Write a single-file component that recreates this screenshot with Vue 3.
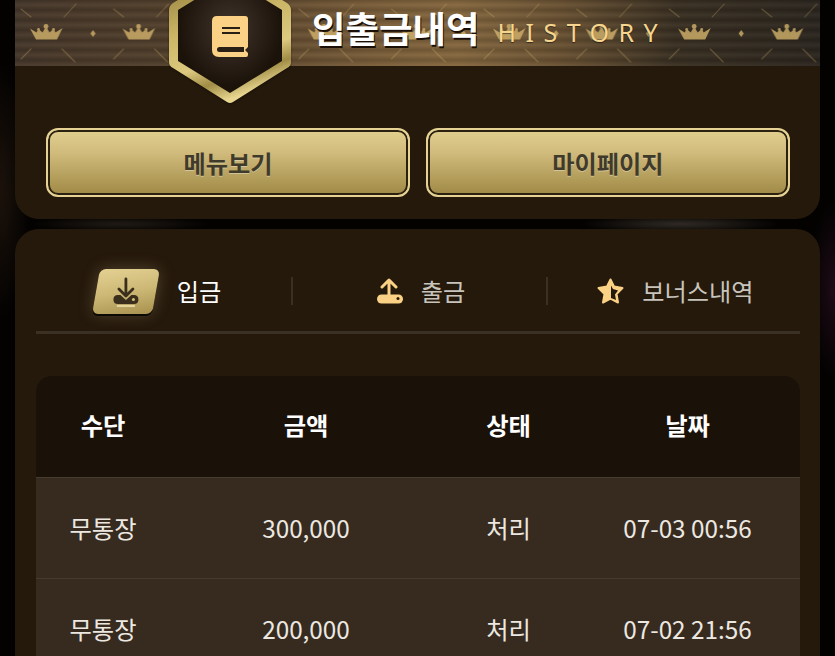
<script setup>
const rows = [
  { method: '무통장', amount: '300,000', status: '처리', date: '07-03 00:56' },
  { method: '무통장', amount: '200,000', status: '처리', date: '07-02 21:56' },
];
</script>

<template>
  <div class="page">
    <section class="top-card">
      <header class="banner">
        <svg class="pattern" width="805" height="66" aria-hidden="true">
          <defs>
            <pattern id="crowns" x="0" y="0" width="92.6" height="66" patternUnits="userSpaceOnUse">
              <g fill="#d2b26a" opacity="0.8">
                <path d="M15 28.500 L21.500 32.500 L23.500 29 L27.500 32.500 L31 26.500 L34.500 32.500 L38.500 29 L40.500 32.500 L47.500 28 L42 39.500 H21 Z" />
                <circle cx="31" cy="26.500" r="2.400" />
                <circle cx="23.500" cy="29.500" r="1.400" />
                <circle cx="38.500" cy="29.500" r="1.400" />
                <path d="M78 30 L80.500 33.500 L78 37 L75.500 33.500 Z" />
              </g>
              <g stroke="#d2b26a" stroke-width="1.100" opacity="0.3" fill="none" stroke-linecap="round">
                <path d="M6 9 L16 17" />
                <path d="M49 17 L61 4" />
                <path d="M6 59 L16 49" />
                <path d="M47 49 L60 62" />
              </g>
            </pattern>
          </defs>
          <rect width="805" height="66" fill="url(#crowns)" />
        </svg>
        <div class="banner-title">
          <h1>입출금내역</h1>
          <span class="history">HISTORY</span>
        </div>
      </header>

      <div class="badge">
        <svg width="122" height="134" viewBox="0 0 122 134">
          <defs>
            <linearGradient id="rim" x1="0.1" y1="0" x2="0.4" y2="1">
              <stop offset="0" stop-color="#8d7838" />
              <stop offset="0.45" stop-color="#cbb566" />
              <stop offset="0.72" stop-color="#dcc97f" />
              <stop offset="0.86" stop-color="#a08c45" />
              <stop offset="1" stop-color="#e8d690" />
            </linearGradient>
            <radialGradient id="core" cx="0.5" cy="0.44" r="0.5">
              <stop offset="0" stop-color="#3f362c" />
              <stop offset="0.6" stop-color="#2a2017" />
              <stop offset="1" stop-color="#1b120a" />
            </radialGradient>
          </defs>
          <path d="M61 -2 L118 33 Q122 36 122 40 V92 Q122 96 118 98 L64 132 Q61 134 58 132 L4 98 Q0 96 0 92 V40 Q0 36 4 33 Z" fill="url(#rim)" />
          <path d="M61 8 L113 40 V91 L61 123 L9 91 V40 Z" fill="url(#core)" />
          <path d="M48 46 H76 Q79 46 79 49 V77 L76 80 L79 83 V85 Q79 87 77 87 H50 Q43 87 43 80 V51 Q43 46 48 46 Z" fill="#fbd285" />
          <path d="M53 58 H71 M53 63 H71" stroke="#2a1f14" stroke-width="2.200" />
          <path d="M75 77 H50.500 Q48 77 48 79.500 Q48 82 50.500 82 H75 Z" fill="#2a1f14" />
        </svg>
      </div>

      <div class="actions">
        <button class="gold-btn">메뉴보기</button>
        <button class="gold-btn">마이페이지</button>
      </div>
    </section>

    <section class="main-card">
      <nav class="tabs">
        <div class="tab active">
          <span class="tab-chip">
            <svg width="26" height="28" viewBox="0 0 26 28">
              <path d="M13 1 V17 M6 11 L13 18 L20 11" fill="none" stroke="#3a2f1c" stroke-width="2.800" stroke-linecap="round" stroke-linejoin="round" />
              <path d="M5 17 H7.500 L13 22 L18.500 17 H21 Q25.500 17 25.500 21.500 Q25.500 26 21 26 H5 Q0.500 26 0.500 21.500 Q0.500 17 5 17 Z" fill="#3a2f1c" />
              <circle cx="20.500" cy="21.500" r="1.500" fill="#d8c27d" />
              <path d="M4 28 H22" stroke="#efe3af" stroke-width="1.600" />
            </svg>
          </span>
          <span class="tab-label">입금</span>
        </div>
        <div class="tab">
          <svg width="26" height="26" viewBox="0 0 26 26">
            <path d="M12 18 V2 M5 9 L12 2 L19 9" fill="none" stroke="#fbd285" stroke-width="3" stroke-linecap="round" stroke-linejoin="round" />
            <rect x="0" y="16.500" width="26" height="9" rx="4.500" fill="#fbd285" />
            <circle cx="21" cy="20.500" r="1.500" fill="#241a0e" />
          </svg>
          <span class="tab-label">출금</span>
        </div>
        <div class="tab">
          <svg width="27" height="26" viewBox="0 0 27 26">
            <path d="M13.500 1.500 L17 8.500 L25.500 10 L19.500 16 L21 24.500 L13.500 20.500 L6 24.500 L7.500 16 L1.500 10 L10 8.500 Z" fill="#fbd285" stroke="#fbd285" stroke-width="2" stroke-linejoin="round" />
            <path d="M14 7.500 L16 11 L21 12.500 L18 16.500 L19 22 L14 20 Z" fill="#241a0e" />
          </svg>
          <span class="tab-label">보너스내역</span>
        </div>
      </nav>

      <div class="history-table">
        <div class="row head">
          <span>수단</span>
          <span>금액</span>
          <span>상태</span>
          <span>날짜</span>
        </div>
        <div v-for="(r, i) in rows" :key="i" class="row body">
          <span>{{ r.method }}</span>
          <span>{{ r.amount }}</span>
          <span>{{ r.status }}</span>
          <span>{{ r.date }}</span>
        </div>
      </div>
    </section>
  </div>
</template>

<style>
html, body {
  margin: 0;
  background: #000;
}
</style>

<style scoped>
.page {
  position: relative;
  width: 835px;
  height: 656px;
  overflow: hidden;
  padding: 0 15px;
  box-sizing: border-box;
  background:
    radial-gradient(ellipse 90px 8px at 120px 224px, #201a14 0%, transparent 100%),
    radial-gradient(ellipse 100px 9px at 680px 224px, #302a24 0%, transparent 100%),
    radial-gradient(ellipse 30px 130px at 0 190px, #1c120b 0%, transparent 100%),
    radial-gradient(ellipse 26px 90px at 835px 290px, #1f0b17 0%, transparent 100%),
    #030201;
  font-family: "Noto Sans CJK KR", "Noto Sans", sans-serif;
  display: flex;
  flex-direction: column;
  gap: 10px;
}

.top-card {
  position: relative;
  height: 219px;
  flex-shrink: 0;
  background: #25190c;
  border-radius: 0 0 24px 24px;
}

.banner {
  position: relative;
  height: 66px;
  background:
    repeating-linear-gradient(180deg, rgba(0, 0, 0, 0.15) 0, rgba(255, 255, 255, 0.03) 5px, rgba(0, 0, 0, 0.15) 10px),
    linear-gradient(90deg, #46372a 0%, #57432c 25%, #7c5f3a 45%, #86683f 55%, #6a5233 68%, #3a3022 82%, #2c261f 100%);
}

.pattern {
  position: absolute;
  left: 0;
  top: 0;
}

.banner-title {
  position: absolute;
  left: 297px;
  top: 0;
  display: flex;
  align-items: center;
  gap: 18px;
  height: 54px;
}

.banner-title h1 {
  margin: 0;
  font-size: 36.400px;
  font-weight: 700;
  color: #fff;
  line-height: 1;
  text-shadow: 1px 2px 0 #1a1008;
}

.history {
  font-size: 25px;
  color: #f6d58e;
  letter-spacing: 9.500px;
  line-height: 1;
  margin-top: 10px;
  font-family: "Noto Sans", sans-serif;
  text-shadow: 0 1px 1px rgba(0, 0, 0, 0.5);
}

.badge {
  position: absolute;
  left: 154px;
  top: -30px;
  line-height: 0;
  filter: drop-shadow(0 1px 1px rgba(0, 0, 0, 0.4));
}

.actions {
  display: flex;
  gap: 16px;
  padding: 62px 30px 0 31px;
}

.gold-btn {
  flex: 1;
  height: 69px;
  box-sizing: border-box;
  padding: 0;
  border: 2px solid #e5d294;
  border-radius: 12px;
  box-shadow: inset 0 0 0 2px #2a2110;
  background: linear-gradient(180deg, #e2cf8e 0%, #d0bb7c 35%, #a08945 100%);
  color: #3f3a2a;
  font-family: inherit;
  font-size: 24.200px;
  font-weight: 700;
  text-shadow: 0 1px 0 rgba(255, 255, 255, 0.35);
}

.main-card {
  flex: 1;
  background: #25190c;
  border-radius: 24px 24px 0 0;
  padding: 39px 20px 0 21px;
}

.tabs {
  display: grid;
  grid-template-columns: 255px 255px 254px;
  height: 63px;
  border-bottom: 3px solid #3a3024;
}

.tab {
  position: relative;
  display: flex;
  align-items: center;
  justify-content: center;
  gap: 18px;
  height: 46px;
  font-size: 24.200px;
  color: #c8c4bc;
  padding-left: 5px;
}

.tab + .tab::before {
  content: "";
  position: absolute;
  left: 0;
  top: 9px;
  height: 28px;
  width: 2px;
  background: #3a3024;
}

.tab.active {
  color: #fff;
  padding-left: 4px;
  padding-right: 14px;
  gap: 21px;
}

.tab-label {
  line-height: 1;
}

.tab-chip {
  display: flex;
  align-items: center;
  justify-content: center;
  width: 60px;
  height: 45px;
  border-radius: 6px;
  transform: skewX(-10deg);
  background: linear-gradient(170deg, #e4d192 0%, #cdb876 50%, #a8914e 100%);
  box-shadow: 0 2px 0 #0c0803, 0 0 16px rgba(225, 205, 143, 0.25);
}

.tab-chip svg {
  transform: skewX(10deg);
  overflow: visible;
}

.history-table {
  margin-top: 42px;
  border-radius: 16px 16px 0 0;
  overflow: hidden;
}

.row {
  display: grid;
  grid-template-columns: 134px 272px 133px 225px;
  text-align: center;
  font-size: 24.300px;
  align-items: center;
}

.head {
  height: 97px;
  padding-bottom: 4px;
  background: #1a1109;
  color: #fff;
  font-weight: 700;
}

.body {
  height: 98px;
  padding-bottom: 2px;
  background: #372b20;
  color: #ece8e1;
  border-top: 1px solid #463c2e;
}
</style>
